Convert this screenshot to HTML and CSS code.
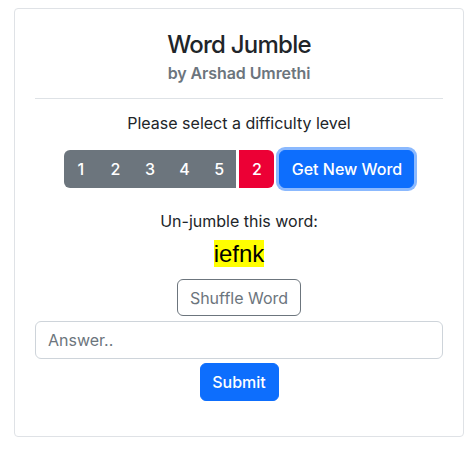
FILE: index.html
```html
<!DOCTYPE html>
<html>
<head>
<meta charset="utf-8">
<link rel="stylesheet" href="styles.css">
</head>
<body>
<div class="card">
  <h4 class="title">Word Jumble</h4>
  <h6 class="subtitle">by Arshad Umrethi</h6>
  <hr class="divider">
  <p class="prompt">Please select a difficulty level</p>
  <div class="controls">
    <div class="levels">
      <button class="btn level">1</button>
      <button class="btn level">2</button>
      <button class="btn level">3</button>
      <button class="btn level">4</button>
      <button class="btn level">5</button>
    </div>
    <button class="btn current">2</button>
    <button class="btn primary focus">Get New Word</button>
  </div>
  <p class="prompt unjumble">Un-jumble this word:</p>
  <div class="word-row"><span class="word">iefnk</span></div>
  <button class="btn outline">Shuffle Word</button>
  <input class="answer" type="text" placeholder="Answer..">
  <button class="btn primary submit">Submit</button>
</div>
</body>
</html>
```

FILE: styles.css
```css
* { box-sizing: border-box; }
html, body { margin: 0; padding: 0; background: #fff; }
body {
  font-family: Inter, "Liberation Sans", Arial, sans-serif;
  color: #212529;
  font-size: 16px;
  padding: 8px 0 0 14px;
}
.card {
  width: 450px;
  height: 429px;
  border: 1px solid #dfe2e6;
  border-radius: 4px;
  padding: 21px 20px 0 20px;
  display: flex;
  flex-direction: column;
  align-items: center;
}
.title {
  margin: 0;
  font-size: 24px;
  line-height: 29px;
  font-weight: 500;
  letter-spacing: -0.75px;
  color: #212529;
}
.subtitle {
  margin: 5px 0 0;
  font-size: 16px;
  line-height: 19px;
  font-weight: 600;
  letter-spacing: -0.1px;
  color: #6c757d;
}
.divider {
  align-self: stretch;
  margin: 15px 0 0;
  border: 0;
  border-top: 1px solid #dee2e6;
  height: 0;
}
.prompt {
  margin: 15px 0 0;
  font-size: 16px;
  line-height: 19px;
}
.controls {
  margin-top: 17px;
  display: flex;
  align-items: center;
}
.btn {
  font-family: inherit;
  font-size: 16px;
  line-height: 24px;
  font-weight: 500;
  border: 1px solid transparent;
  border-radius: 6px;
  padding: 6px 12px;
  height: 38px;
  cursor: pointer;
}
.levels {
  display: flex;
  background: #6c757d;
  border-radius: 6px 0 0 6px;
}
.level {
  width: 34.6px;
  padding: 0;
  background: transparent;
  color: #fff;
  border: 0;
  border-radius: 0;
}
.current {
  margin-left: 3px;
  width: 35px;
  padding: 0;
  background: #ec0035;
  color: #fff;
  border-radius: 0 6px 6px 0;
}
.primary {
  background: #0d6efd;
  color: #fff;
  border-color: #0d6efd;
}
.focus {
  margin-left: 5px;
  width: 135px;
  padding: 0;
  box-shadow: 0 0 0 3px #8bb9fe;
}
.unjumble { margin-top: 24px; }
.word-row {
  margin-top: 8px;
  font-family: "Liberation Sans", Arial, sans-serif;
  font-size: 24px;
  line-height: 29px;
}
.word {
  background: #ffff00;
  color: #000;
}
.outline {
  margin-top: 11px;
  background: #fff;
  color: #6c757d;
  border-color: #6c757d;
  font-weight: 400;
  height: 37px;
  width: 124px;
  padding: 0;
}
.answer {
  margin-top: 5px;
  align-self: stretch;
  height: 38px;
  border: 1px solid #ced4da;
  border-radius: 6px;
  padding: 6px 12px;
  font-family: inherit;
  font-size: 16px;
  color: #212529;
}
.answer::placeholder { color: #6c757d; }
.submit {
  margin-top: 4px;
  width: 79px;
  padding: 0;
}
```
